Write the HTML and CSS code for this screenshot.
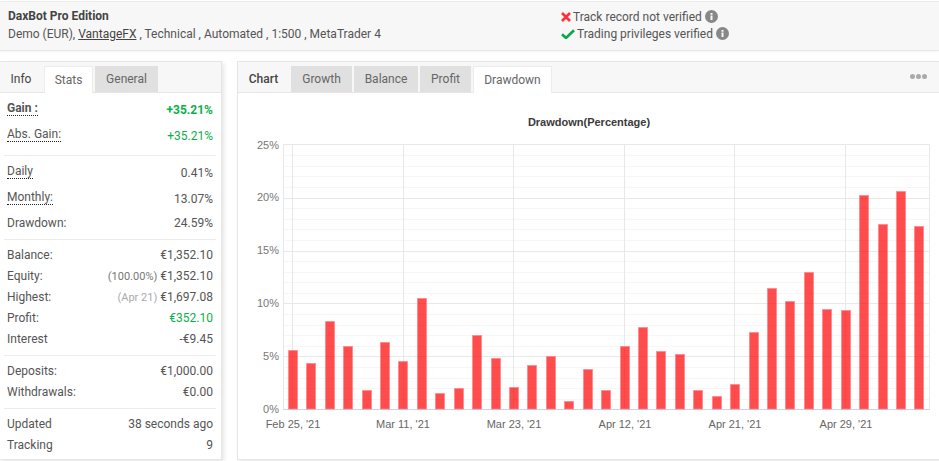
FILE: index.html
```html
<!DOCTYPE html>
<html lang="en">
<head>
<meta charset="utf-8">
<title>DaxBot Pro Edition</title>
<link rel="stylesheet" href="styles.css">
</head>
<body>
<header class="head">
  <div class="head-info">
    <div class="head-title">DaxBot Pro Edition</div>
    <div class="head-sub">Demo (EUR), <a class="head-link">VantageFX</a> , Technical , Automated , 1:500 , MetaTrader 4</div>
  </div>
  <div class="head-status">
    <div class="status"><svg class="ico-x" viewBox="0 0 10 10"><path d="M1 1L9 9M9 1L1 9"/></svg><span>Track record not verified</span><svg class="ico-info" viewBox="0 0 13 13"><circle cx="6.5" cy="6.5" r="6.5"/><rect x="5.5" y="5.5" width="2" height="4.5"/><rect x="5.5" y="3" width="2" height="1.8"/></svg></div>
    <div class="status"><svg class="ico-check" viewBox="0 0 14 10"><path d="M1 5.2L5 9L13 1.2"/></svg><span>Trading privileges verified</span><svg class="ico-info" viewBox="0 0 13 13"><circle cx="6.5" cy="6.5" r="6.5"/><rect x="5.5" y="5.5" width="2" height="4.5"/><rect x="5.5" y="3" width="2" height="1.8"/></svg></div>
  </div>
</header>
<main class="columns">
  <section class="panel side">
    <nav class="tabs">
      <span class="tab tab-plain">Info</span>
      <span class="tab tab-active tab-stats">Stats</span>
      <span class="tab tab-grey tab-general">General</span>
    </nav>
    <div class="group group-gain">
      <div class="row row-gain"><span class="lbl dotted strong">Gain :</span><span class="val val-low strong green">+35.21%</span></div>
      <div class="row row-gain"><span class="lbl dotted">Abs. Gain:</span><span class="val val-low green">+35.21%</span></div>
    </div>
    <div class="group group-rate">
      <div class="row row-rate"><span class="lbl dotted">Daily</span><span class="val val-low">0.41%</span></div>
      <div class="row row-rate"><span class="lbl dotted">Monthly:</span><span class="val val-low">13.07%</span></div>
      <div class="row row-rate"><span class="lbl">Drawdown:</span><span class="val">24.59%</span></div>
    </div>
    <div class="group">
      <div class="row"><span class="lbl">Balance:</span><span class="val">€1,352.10</span></div>
      <div class="row"><span class="lbl">Equity:</span><span class="val"><span class="muted">(100.00%)</span> €1,352.10</span></div>
      <div class="row"><span class="lbl">Highest:</span><span class="val"><span class="muted light">(Apr 21)</span> €1,697.08</span></div>
      <div class="row"><span class="lbl">Profit:</span><span class="val green">€352.10</span></div>
      <div class="row"><span class="lbl">Interest</span><span class="val">-€9.45</span></div>
    </div>
    <div class="group">
      <div class="row"><span class="lbl">Deposits:</span><span class="val">€1,000.00</span></div>
      <div class="row"><span class="lbl">Withdrawals:</span><span class="val">€0.00</span></div>
    </div>
    <div class="group group-last">
      <div class="row"><span class="lbl">Updated</span><span class="val">38 seconds ago</span></div>
      <div class="row"><span class="lbl">Tracking</span><span class="val">9</span></div>
    </div>
  </section>
  <section class="panel main">
    <nav class="tabs tabs-main">
      <span class="tab tab-plain tab-chart">Chart</span>
      <span class="tab tab-grey tab-growth">Growth</span>
      <span class="tab tab-grey tab-balance">Balance</span>
      <span class="tab tab-grey tab-profit">Profit</span>
      <span class="tab tab-active tab-drawdown">Drawdown</span>
      <span class="more"><i></i><i></i><i></i></span>
    </nav>
    <svg class="chart" viewBox="238 93 701 366" width="701" height="366">
      <text class="chart-title" x="589" y="126" text-anchor="middle">Drawdown(Percentage)</text>
      <g class="minor">
        <path d="M283 155.500H930M283 166.500H930M283 176.500H930M283 187.500H930M283 208.500H930M283 219.500H930M283 229.500H930M283 240.500H930M283 261.500H930M283 272.500H930M283 282.500H930M283 293.500H930M283 314.500H930M283 325.500H930M283 335.500H930M283 346.500H930M283 367.500H930M283 378.500H930M283 388.500H930M283 399.500H930"/>
      </g>
      <g class="major">
        <path d="M283 144.500H930M283 198.500H930M283 251.500H930M283 303.500H930M283 356.500H930"/>
        <path d="M283.500 144V409M292.500 144V409M403.500 144V409M513.500 144V409M624.500 144V409M734.500 144V409M845.500 144V409M929.500 144V409"/>
      </g>
      <path class="axis" d="M283 409.500H930"/>
      <g class="bars">
        <rect x="288.500" y="350.500" width="9" height="58.500"/>
        <rect x="306.500" y="363.500" width="9" height="45.500"/>
        <rect x="325.500" y="321.500" width="9" height="87.500"/>
        <rect x="343.500" y="346.500" width="9" height="62.500"/>
        <rect x="362.500" y="390.500" width="9" height="18.500"/>
        <rect x="380.500" y="342.500" width="9" height="66.500"/>
        <rect x="398.500" y="361.500" width="9" height="47.500"/>
        <rect x="417.500" y="298.500" width="9" height="110.500"/>
        <rect x="435.500" y="393.500" width="9" height="15.500"/>
        <rect x="454.500" y="388.500" width="9" height="20.500"/>
        <rect x="472.500" y="335.500" width="9" height="73.500"/>
        <rect x="491.500" y="358.500" width="9" height="50.500"/>
        <rect x="509.500" y="387.500" width="9" height="21.500"/>
        <rect x="527.500" y="365.500" width="9" height="43.500"/>
        <rect x="546.500" y="356.500" width="9" height="52.500"/>
        <rect x="564.500" y="401.500" width="9" height="7.500"/>
        <rect x="583.500" y="369.500" width="9" height="39.500"/>
        <rect x="601.500" y="390.500" width="9" height="18.500"/>
        <rect x="620.500" y="346.500" width="9" height="62.500"/>
        <rect x="638.500" y="327.500" width="9" height="81.500"/>
        <rect x="656.500" y="351.500" width="9" height="57.500"/>
        <rect x="675.500" y="354.500" width="9" height="54.500"/>
        <rect x="693.500" y="390.500" width="9" height="18.500"/>
        <rect x="712.500" y="396.500" width="9" height="12.500"/>
        <rect x="730.500" y="384.500" width="9" height="24.500"/>
        <rect x="749.500" y="332.500" width="9" height="76.500"/>
        <rect x="767.500" y="288.500" width="9" height="120.500"/>
        <rect x="785.500" y="301.500" width="9" height="107.500"/>
        <rect x="804.500" y="272.500" width="9" height="136.500"/>
        <rect x="822.500" y="309.500" width="9" height="99.500"/>
        <rect x="841.500" y="310.500" width="9" height="98.500"/>
        <rect x="859.500" y="195.500" width="9" height="213.500"/>
        <rect x="878.500" y="224.500" width="9" height="184.500"/>
        <rect x="896.500" y="191.500" width="9" height="217.500"/>
        <rect x="914.500" y="226.500" width="9" height="182.500"/>
      </g>
      <g class="ylabels">
        <text x="279" y="149">25%</text>
        <text x="279" y="201">20%</text>
        <text x="279" y="254">15%</text>
        <text x="279" y="307">10%</text>
        <text x="279" y="360">5%</text>
        <text x="279" y="413">0%</text>
      </g>
      <g class="xlabels">
        <text x="293" y="428">Feb 25, '21</text>
        <text x="403" y="428">Mar 11, '21</text>
        <text x="514" y="428">Mar 23, '21</text>
        <text x="625" y="428">Apr 12, '21</text>
        <text x="735" y="428">Apr 21, '21</text>
        <text x="846" y="428">Apr 29, '21</text>
      </g>
    </svg>
  </section>
</main>
</body>
</html>
```

FILE: styles.css
```css
* { box-sizing: border-box; }
html, body { margin: 0; padding: 0; background: #fff; }
body {
  width: 939px;
  height: 461px;
  overflow: hidden;
  font-family: Roboto, "Liberation Sans", sans-serif;
  font-size: 12px;
  color: #555;
}

/* Header strip */
.head {
  height: 50px;
  margin-top: 1px;
  display: flex;
  background: #f7f7f7;
  border-top: 1px solid #ebebeb;
  border-bottom: 1px solid #e8e8e8;
  box-shadow: 0 1px 2px rgba(0, 0, 0, .05);
}
.head-info { width: 561px; padding: 6px 0 0 8px; }
.head-title { font-weight: 700; color: #444; line-height: 16px; }
.head-sub { margin-top: 2px; line-height: 16px; }
.head-link { color: #444; text-decoration: underline; }
.head-status { padding-top: 6px; }
.status { display: flex; align-items: center; height: 17px; }
.status span { margin: 0 3px; }
.ico-x { width: 10px; height: 10px; fill: none; stroke: #ff2f3a; stroke-width: 2.6; margin-right: -1px; }
.ico-check { width: 14px; height: 10px; fill: none; stroke: #0aa848; stroke-width: 2.6; margin-right: -1px; }
.ico-info { width: 13px; height: 13px; fill: #888; }
.ico-info rect { fill: #f7f7f7; }

/* Columns */
.columns { display: flex; margin-top: 10px; gap: 15px; }
.panel {
  height: 399px;
  background: #fff;
  border: 1px solid #e6e6e6;
  box-shadow: 2px 2px 4px rgba(0, 0, 0, .1);
}
.side { width: 222px; border-left: 0; }
.main { width: 702px; border-right: 0; }

/* Tabs */
.tabs {
  height: 31px;
  display: flex;
  align-items: flex-end;
  background: #f7f7f7;
  border-bottom: 1px solid #e6e6e6;
  line-height: 26px;
  font-size: 12px;
}
.tab { height: 26px; text-align: center; display: block; }
.tab-plain { width: 42px; color: #444; height: 26px; }
.tab-active { background: #fff; height: 27px; margin-bottom: -1px; border: 1px solid #ececec; border-bottom: 0; color: #666; }
.tab-grey { background: #e0e0e0; color: #666; }
.tab-stats { width: 49px; margin-left: 2px; }
.tab-general { width: 63px; margin-left: 2px; }
.tab-chart { width: 53px; padding-right: 2px; font-weight: 500; }
.tab-growth { width: 61px; }
.tab-balance { width: 64px; margin-left: 2px; }
.tab-profit { width: 51px; margin-left: 2px; }
.tab-drawdown { width: 79px; margin-left: 2px; }
.more { margin-left: auto; display: flex; gap: 1px; align-self: flex-start; margin-top: 12px; margin-right: 12px; }
.more i { width: 5px; height: 5px; border-radius: 50%; background: #aaa; display: block; }

/* Stats list */
.group { padding: 4.500px 0 5.500px; margin-left: 4px; margin-right: 5px; border-bottom: 1px solid #ececec; }
.group-gain { padding: 2px 0 8px; }
.group-rate { padding: 3px 0 3.500px; }
.group-last { border-bottom: 0; }
.row { display: flex; justify-content: space-between; align-items: center; height: 21px; padding: 0 3px; }
.row-gain { height: 26px; }
.row-rate { height: 25.500px; }
.lbl { line-height: 14px; }
.dotted { border-bottom: 1px dotted #222; }
.strong { font-weight: 700; }
.val { font-size: 12px; }
.val-low { padding-top: 3px; }
.green { color: #0ab04a; }
.muted { color: #777; font-size: 11px; }
.muted.light { color: #aaa; }

/* Chart */
.chart { display: block; }
.chart-title { font: 700 11px "Liberation Sans", sans-serif; fill: #3a3a3a; }
.minor path { stroke: #f6f6f6; stroke-width: 1; fill: none; }
.major path { stroke: #e8e8e8; stroke-width: 1; fill: none; }
.axis { stroke: #ccd6eb; stroke-width: 1; }
.bars rect { fill: rgba(255, 0, 0, .7); stroke: rgba(255, 130, 135, .7); stroke-width: 1; }
.ylabels text { font: 11px "Liberation Sans", sans-serif; fill: #777; text-anchor: end; }
.xlabels text { font: 11px "Liberation Sans", sans-serif; fill: #666; text-anchor: middle; }
```
